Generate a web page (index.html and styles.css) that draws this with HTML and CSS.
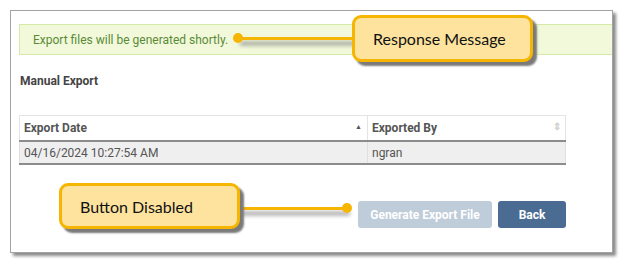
FILE: index.html
```html
<!DOCTYPE html>
<html lang="en">

<head>
    <meta charset="UTF-8">
    <meta name="viewport" content="width=device-width, initial-scale=1.0">
    <title>Manual Export</title>
    <link rel="stylesheet" href="styles.css">
</head>

<body>

    <div class="ramme">
        <div class="melding">Export files will be generated shortly.</div>

        <h4 class="tittel">Manual Export</h4>

        <table class="tabell">
            <thead>
                <tr>
                    <th class="kolDato">Export Date <span class="sortOpp">&#9650;</span></th>
                    <th>Exported By <span class="sortBegge">&#8661;</span></th>
                </tr>
            </thead>
            <tbody>
                <tr>
                    <td>04/16/2024 10:27:54 AM</td>
                    <td>ngran</td>
                </tr>
            </tbody>
        </table>

        <div class="knapper">
            <button class="knapp knappAv" disabled>Generate Export File</button>
            <button class="knapp knappBlaa">Back</button>
        </div>
    </div>

    <!-- forklaringer over skjermbildet -->
    <div class="linje linjeSvar"></div>
    <div class="prikk prikkSvar"></div>
    <div class="boble bobleSvar">Response Message</div>

    <div class="linje linjeKnapp"></div>
    <div class="prikk prikkKnapp"></div>
    <div class="boble bobleKnapp">Button Disabled</div>

</body>

</html>
```

FILE: styles.css
```css
body {
    margin: 0;
    background-color: white;
    font-family: Roboto, "Liberation Sans", sans-serif;
    position: relative;
    width: 623px;
    height: 263px;
    overflow: hidden;
}

.ramme {
    margin: 10px 0 0 10px;
    width: 603px;
    height: 243px;
    box-sizing: border-box;
    border: 1px solid #a3a3a3;
    box-shadow: 3px 3px 3px #8a8a8a;
    padding: 13px 0 0 8px;
    overflow: hidden;
}

.melding {
    height: 31px;
    box-sizing: border-box;
    background-color: #f2f9da;
    border: 1px solid #d5eaa6;
    border-right: none;
    color: #5a8a38;
    font-size: 12px;
    padding: 0 0 0 13px;
    display: flex;
    align-items: center;
}

.tittel {
    margin: 18px 0 0 1px;
    font-size: 12px;
    line-height: 16px;
    color: #444;
}

.tabell {
    margin-top: 26px;
    width: 547px;
    border-collapse: collapse;
    font-size: 12px;
    color: #555;
}

.tabell th {
    text-align: left;
    height: 24px;
    padding: 0 4px;
    border: 1px solid #e4e4e4;
    border-bottom: 2px solid #8c8c8c;
    position: relative;
}

.kolDato {
    width: 339px;
}

.tabell td {
    height: 21px;
    padding: 0 4px;
    background-color: #efefef;
    border-left: 1px solid #e0e0e0;
    border-right: 1px solid #e0e0e0;
    border-bottom: 2px solid #8c8c8c;
}

.sortOpp {
    position: absolute;
    right: 5px;
    top: 7px;
    font-size: 7px;
    color: #555;
}

.sortBegge {
    position: absolute;
    right: 4px;
    top: 5px;
    font-size: 10px;
    color: #cfcfcf;
}

.knapper {
    display: flex;
    gap: 6px;
    margin: 36px 0 0 339px;
}

.knapp {
    height: 27px;
    border: none;
    border-radius: 3px;
    color: white;
    font-family: Roboto, "Liberation Sans", sans-serif;
    font-weight: bold;
    font-size: 12px;
}

.knappAv {
    width: 134px;
    background-color: #bfccda;
}

.knappBlaa {
    width: 68px;
    background-color: #4a6b92;
}

.boble {
    position: absolute;
    box-sizing: border-box;
    background-color: #fde39e;
    border: 3px solid #f6b500;
    border-radius: 9px;
    box-shadow: 4px 4px 2px #7a7a7a;
    font-family: Lato, "Open Sans", sans-serif;
    font-size: 16px;
    color: #111;
    display: flex;
    align-items: center;
}

.bobleSvar {
    left: 352px;
    top: 15px;
    width: 181px;
    height: 47px;
    padding-left: 18px;
}

.bobleKnapp {
    left: 59px;
    top: 183px;
    width: 181px;
    height: 46px;
    padding-left: 18px;
}

.linje {
    position: absolute;
    height: 3px;
    background-color: #f6b500;
    box-shadow: 2px 5px 4px #8a8a8a;
}

.linjeSvar {
    left: 238px;
    top: 37px;
    width: 116px;
}

.linjeKnapp {
    left: 238px;
    top: 207px;
    width: 110px;
}

.prikk {
    position: absolute;
    width: 10px;
    height: 10px;
    border-radius: 50%;
    background-color: #f6b500;
}

.prikkSvar {
    left: 233px;
    top: 33px;
}

.prikkKnapp {
    left: 342px;
    top: 203px;
}
```
